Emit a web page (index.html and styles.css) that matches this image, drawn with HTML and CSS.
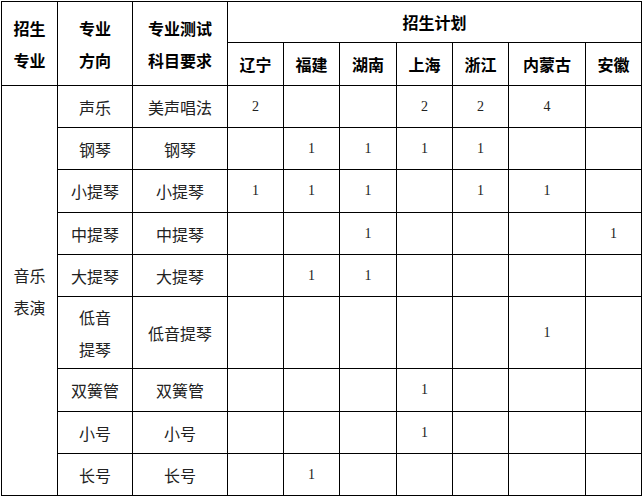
FILE: index.html
```html
<!DOCTYPE html>
<html lang="zh">
<head>
<meta charset="utf-8">
<link rel="stylesheet" href="styles.css">
</head>
<body>
<table class="plan">
  <colgroup>
    <col class="c1"><col class="c2"><col class="c3">
    <col class="p1"><col class="p2"><col class="p3"><col class="p4"><col class="p5"><col class="p6"><col class="p7">
  </colgroup>
  <tr class="h1">
    <th rowspan="2" class="multi">招生<br>专业</th>
    <th rowspan="2" class="multi">专业<br>方向</th>
    <th rowspan="2" class="multi">专业测试<br>科目要求</th>
    <th colspan="7">招生计划</th>
  </tr>
  <tr class="h2">
    <th>辽宁</th><th>福建</th><th>湖南</th><th>上海</th><th>浙江</th><th>内蒙古</th><th>安徽</th>
  </tr>
  <tr class="r">
    <td rowspan="9" class="multi major">音乐<br>表演</td>
    <td>声乐</td><td>美声唱法</td>
    <td class="n">2</td><td></td><td></td><td class="n">2</td><td class="n">2</td><td class="n">4</td><td></td>
  </tr>
  <tr class="r">
    <td>钢琴</td><td>钢琴</td>
    <td></td><td class="n">1</td><td class="n">1</td><td class="n">1</td><td class="n">1</td><td></td><td></td>
  </tr>
  <tr class="r r44">
    <td>小提琴</td><td>小提琴</td>
    <td class="n">1</td><td class="n">1</td><td class="n">1</td><td></td><td class="n">1</td><td class="n">1</td><td></td>
  </tr>
  <tr class="r">
    <td>中提琴</td><td>中提琴</td>
    <td></td><td></td><td class="n">1</td><td></td><td></td><td></td><td class="n">1</td>
  </tr>
  <tr class="r">
    <td>大提琴</td><td>大提琴</td>
    <td></td><td class="n">1</td><td class="n">1</td><td></td><td></td><td></td><td></td>
  </tr>
  <tr class="tall">
    <td class="multi">低音<br>提琴</td><td>低音提琴</td>
    <td></td><td></td><td></td><td></td><td></td><td class="n">1</td><td></td>
  </tr>
  <tr class="r r43">
    <td>双簧管</td><td>双簧管</td>
    <td></td><td></td><td></td><td class="n">1</td><td></td><td></td><td></td>
  </tr>
  <tr class="r">
    <td>小号</td><td>小号</td>
    <td></td><td></td><td></td><td class="n">1</td><td></td><td></td><td></td>
  </tr>
  <tr class="r r41">
    <td>长号</td><td>长号</td>
    <td></td><td class="n">1</td><td></td><td></td><td></td><td></td><td></td>
  </tr>
</table>
</body>
</html>
```
FILE: styles.css
```css
html, body {
  margin: 0;
  padding: 0;
  background: #fff;
}
body {
  padding: 1px 0 0 1px;
}
.plan {
  border-collapse: collapse;
  table-layout: fixed;
  width: 640px;
  font-family: "Noto Sans CJK SC", "Noto Sans", sans-serif;
  font-size: 16px;
  color: #222;
}
.c1 { width: 56px; }
.c2 { width: 75px; }
.c3 { width: 95px; }
.p1 { width: 56px; }
.p2 { width: 56px; }
.p3 { width: 57px; }
.p4 { width: 56px; }
.p5 { width: 56px; }
.p6 { width: 77px; }
.p7 { width: 56px; }
.plan th, .plan td {
  border: 1px solid #000;
  padding: 0;
  text-align: center;
  vertical-align: middle;
  line-height: 20px;
  white-space: nowrap;
}
.plan th {
  font-weight: 700;
  font-size: 16px;
  color: #000;
}
.plan .multi {
  line-height: 32px;
}
.h1 { height: 41px; }
.h2 { height: 43px; }
.r { height: 42px; }
.r44 { height: 43px; }
.r43 { height: 43px; }
.r41 { height: 42px; }
.tall { height: 72px; }
.plan .n {
  font-family: "Liberation Serif", serif;
  font-size: 14px;
  color: #222;
}
```
